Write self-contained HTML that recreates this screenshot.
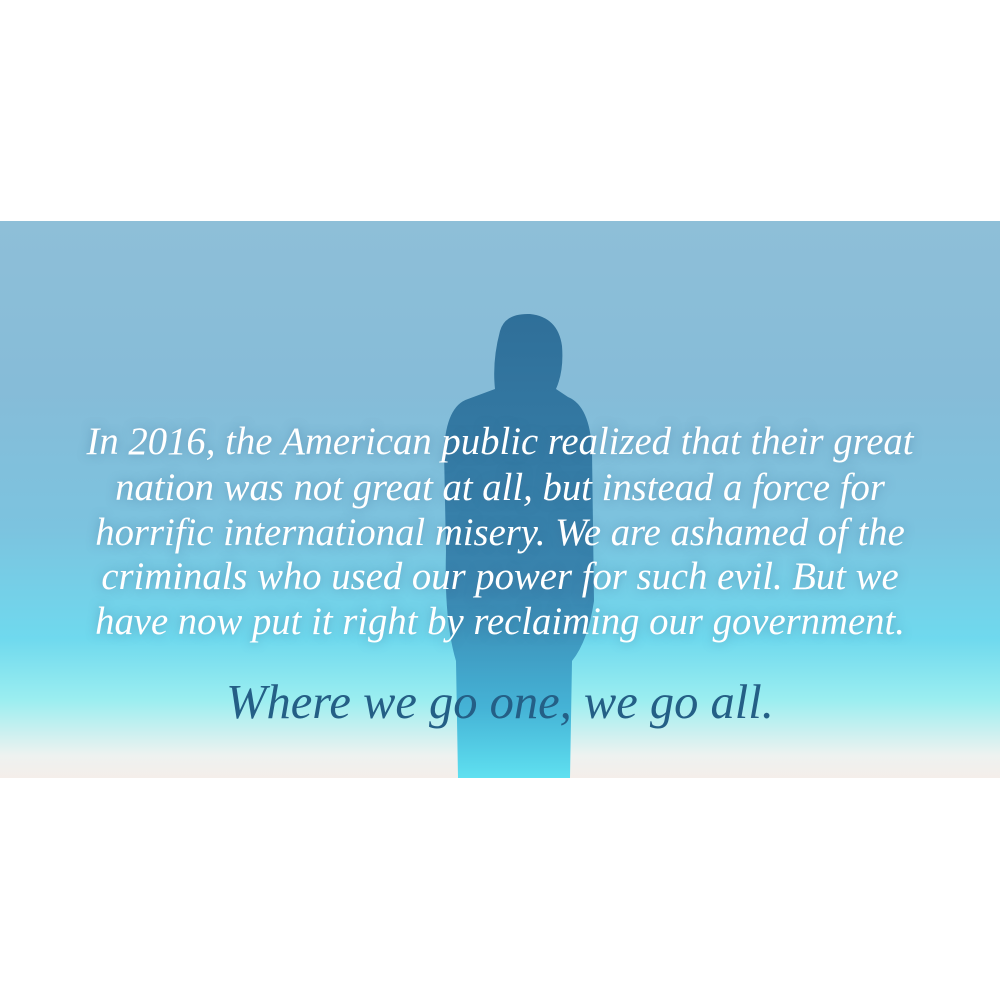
<!DOCTYPE html>
<html><head><style>
body{margin:0;width:1000px;height:1000px;background:#fff;position:relative;overflow:hidden}
#b{position:absolute;left:0;top:221px;width:1000px;height:557px;overflow:hidden;
background:linear-gradient(180deg,#8ebfd8 0%,#86bcd8 30%,#7cc3df 55%,#6fd9ee 75%,#9beef0 86%,#eef2f0 96%,#f4eeea 100%)}
.t{position:absolute;left:0;width:1000px;text-align:center;font-family:"Liberation Serif",serif;font-style:italic;color:#fff;font-size:38.7px;text-shadow:0 0 10px rgba(60,110,150,.5);line-height:44px}
</style></head><body>
<div id="b">
<svg width="1000" height="557" style="position:absolute;left:0;top:0">
<defs><linearGradient id="g" x1="0" y1="0" x2="0" y2="1">
<stop offset="0" stop-color="#2f6f99"/><stop offset=".6" stop-color="#3a86b0"/><stop offset=".85" stop-color="#45b3d6"/><stop offset="1" stop-color="#5fe0f0"/></linearGradient></defs>
<path fill="url(#g)" d="M500 110 Q505 92 530 93 Q558 96 562 125 Q564 150 556 168 L568 176 Q590 185 592 230 L594 380 Q588 420 572 440 L570 557 L458 557 L456 440 Q444 400 446 330 L444 230 Q446 185 468 178 L495 168 Q492 140 500 110 Z"/>
</svg>
<div class="t" style="top:199px">In 2016, the American public realized that their great</div>
<div class="t" style="top:245px">nation was not great at all, but instead a force for</div>
<div class="t" style="top:290px">horrific international misery. We are ashamed of the</div>
<div class="t" style="top:334px">criminals who used our power for such evil. But we</div>
<div class="t" style="top:379px">have now put it right by reclaiming our government.</div>
<div class="t" style="top:454px;font-size:48.5px;line-height:56px;color:#245f86;text-shadow:none">Where we go one, we go all.</div>
</div>
</body></html>
